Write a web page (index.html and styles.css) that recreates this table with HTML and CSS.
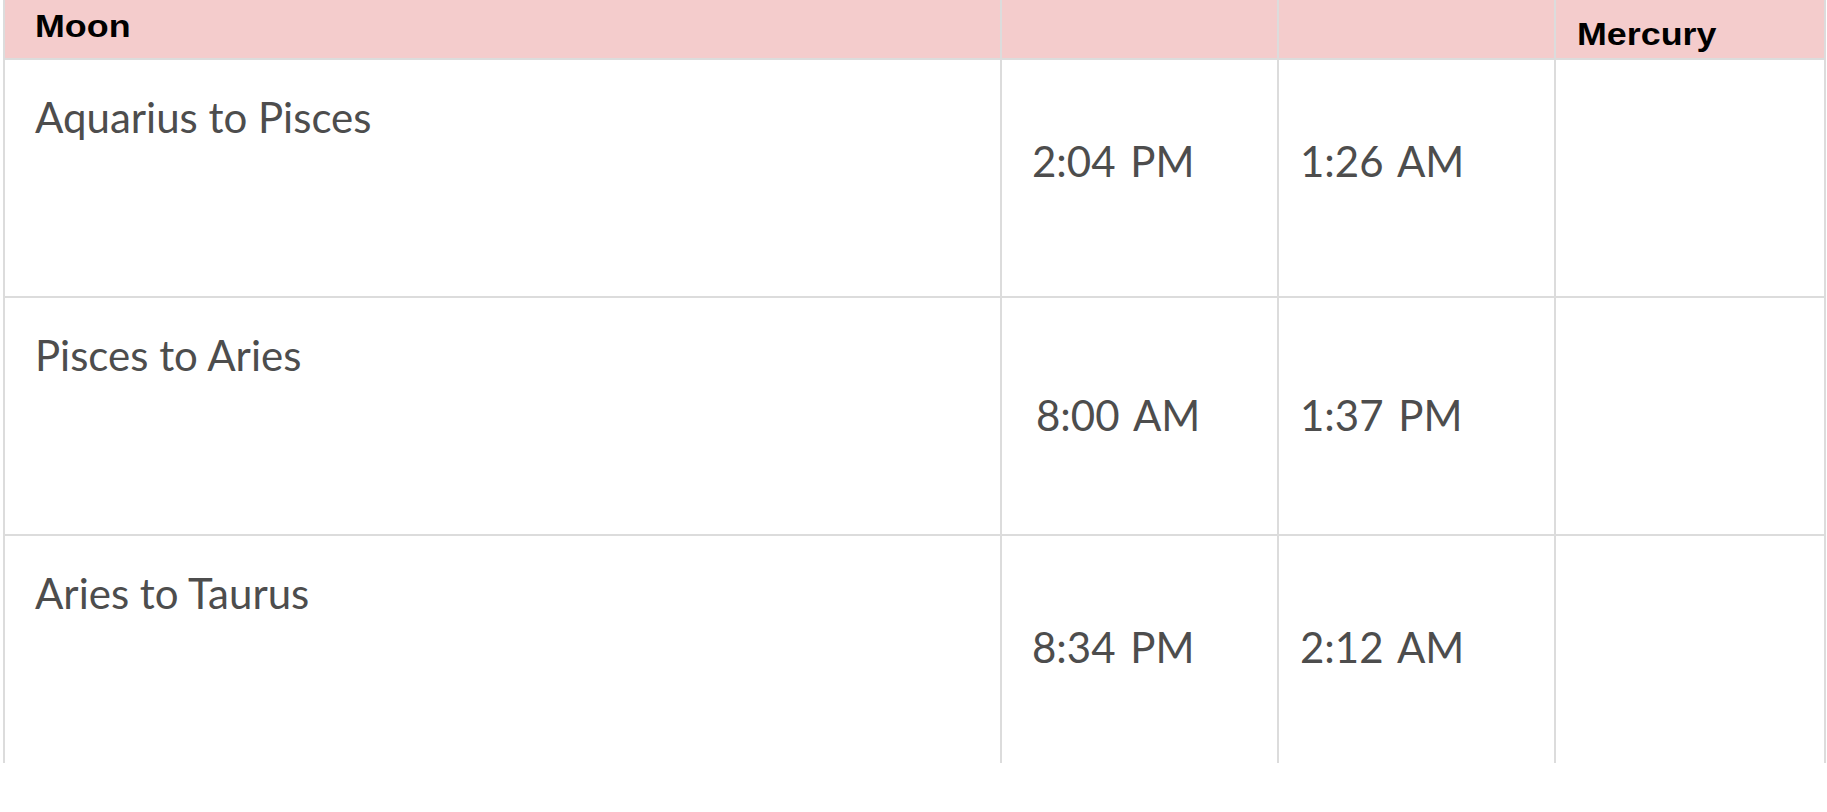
FILE: index.html
```html
<!DOCTYPE html>
<html>
<head>
    <title>Moon and Mercury Transits</title>
    <link rel="stylesheet" href="styles.css">
</head>
<body>
    <!-- Sheet is clipped at the bottom, like the original view -->
    <div class="sheet">
        <table class="transits">
            <colgroup>
                <col class="col-sign">
                <col class="col-time">
                <col class="col-time">
                <col class="col-last">
            </colgroup>
            <thead>
                <tr>
                    <th class="head-moon"><span class="head-label">Moon</span></th>
                    <th></th>
                    <th></th>
                    <th class="head-mercury"><span class="head-label">Mercury</span></th>
                </tr>
            </thead>
            <tbody>
                <tr class="row-one">
                    <td class="sign">Aquarius to Pisces</td>
                    <td class="time">2:04 PM</td>
                    <td class="time time-end">1:26 AM</td>
                    <td></td>
                </tr>
                <tr class="row-two">
                    <td class="sign">Pisces to Aries</td>
                    <td class="time time-first">8:00 AM</td>
                    <td class="time time-end">1:37 PM</td>
                    <td></td>
                </tr>
                <tr class="row-three">
                    <td class="sign">Aries to Taurus</td>
                    <td class="time">8:34 PM</td>
                    <td class="time time-end">2:12 AM</td>
                    <td></td>
                </tr>
            </tbody>
        </table>
    </div>
</body>
</html>
```

FILE: styles.css
```css
body {
    margin: 0;
    background-color: #fff;
}

.sheet {
    height: 763px;
    overflow: hidden;
    padding-left: 3px;
}

.transits {
    border-collapse: collapse;
    table-layout: fixed;
    width: 1823px;
}

.col-sign {
    width: 997px;
}

.col-time {
    width: 277px;
}

th, td {
    box-sizing: border-box;
    border: 2px solid #dcdcdc;
    padding: 0;
    vertical-align: top;
    text-align: left;
}

thead tr {
    height: 59px;
}

tbody tr {
    height: 238px;
}

/* pink header band */
thead th {
    border-top: none;
    background-color: #f4cccc;
    font-family: "Liberation Sans", Arial, sans-serif;
    font-weight: bold;
    font-size: 32px;
    line-height: 1;
    color: #000;
}

.head-label {
    display: inline-block;
    transform: scaleX(1.12);
    transform-origin: left;
}

.head-moon {
    padding: 10px 0 0 30px;
}

.head-mercury {
    padding: 18px 0 0 21px;
}

tbody td {
    font-family: Lato, "Liberation Sans", sans-serif;
    font-size: 42px;
    line-height: 1.2;
    color: #4d4d4d;
}

.sign {
    padding: 32px 0 0 30px;
}

.time {
    padding-left: 30px;
    word-spacing: 4px;
}

.time-end {
    padding-left: 21px;
}

.row-one .time {
    padding-top: 76px;
}

.row-two .time {
    padding-top: 92px;
}

.row-two .time-first {
    padding-left: 34px;
}

.row-three .time {
    padding-top: 86px;
}
```
